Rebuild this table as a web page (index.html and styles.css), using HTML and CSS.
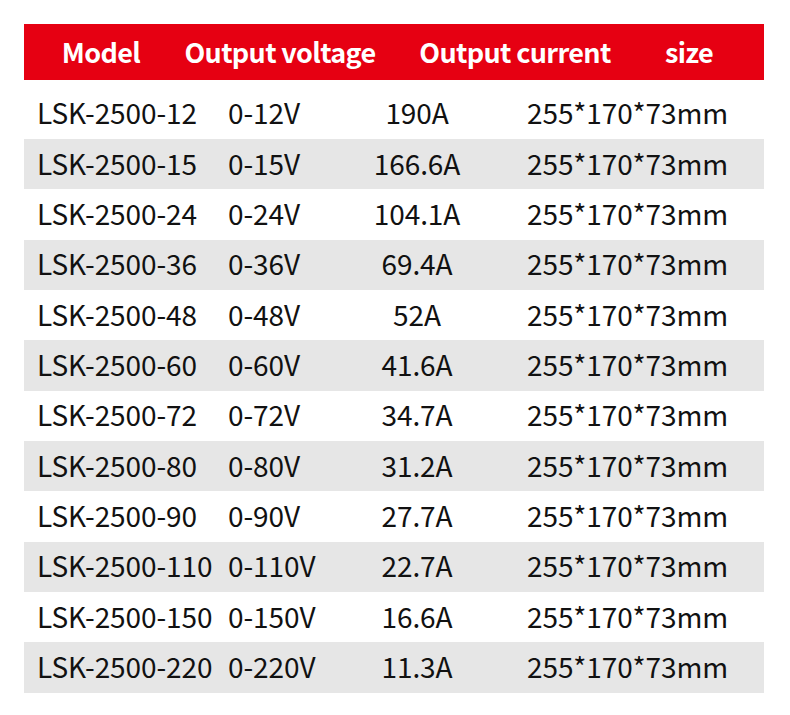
FILE: index.html
```html
<!DOCTYPE html>
<html>
<head>
<meta charset="utf-8">
<link rel="stylesheet" href="styles.css">
</head>
<body>
<div class="page">
  <div class="spec">
    <div class="head">
      <div class="hcell">Model</div>
      <div class="hcell">Output voltage</div>
      <div class="hcell">Output current</div>
      <div class="hcell">size</div>
    </div>
    <div class="rows">
      <div class="row"><div class="c1">LSK-2500-12</div><div class="c2">0-12V</div><div class="c3">190A</div><div class="c4">255*170*73mm</div></div>
      <div class="row alt"><div class="c1">LSK-2500-15</div><div class="c2">0-15V</div><div class="c3">166.6A</div><div class="c4">255*170*73mm</div></div>
      <div class="row"><div class="c1">LSK-2500-24</div><div class="c2">0-24V</div><div class="c3">104.1A</div><div class="c4">255*170*73mm</div></div>
      <div class="row alt"><div class="c1">LSK-2500-36</div><div class="c2">0-36V</div><div class="c3">69.4A</div><div class="c4">255*170*73mm</div></div>
      <div class="row"><div class="c1">LSK-2500-48</div><div class="c2">0-48V</div><div class="c3">52A</div><div class="c4">255*170*73mm</div></div>
      <div class="row alt"><div class="c1">LSK-2500-60</div><div class="c2">0-60V</div><div class="c3">41.6A</div><div class="c4">255*170*73mm</div></div>
      <div class="row"><div class="c1">LSK-2500-72</div><div class="c2">0-72V</div><div class="c3">34.7A</div><div class="c4">255*170*73mm</div></div>
      <div class="row alt"><div class="c1">LSK-2500-80</div><div class="c2">0-80V</div><div class="c3">31.2A</div><div class="c4">255*170*73mm</div></div>
      <div class="row"><div class="c1">LSK-2500-90</div><div class="c2">0-90V</div><div class="c3">27.7A</div><div class="c4">255*170*73mm</div></div>
      <div class="row alt"><div class="c1">LSK-2500-110</div><div class="c2">0-110V</div><div class="c3">22.7A</div><div class="c4">255*170*73mm</div></div>
      <div class="row"><div class="c1">LSK-2500-150</div><div class="c2">0-150V</div><div class="c3">16.6A</div><div class="c4">255*170*73mm</div></div>
      <div class="row alt"><div class="c1">LSK-2500-220</div><div class="c2">0-220V</div><div class="c3">11.3A</div><div class="c4">255*170*73mm</div></div>
    </div>
  </div>
</div>
</body>
</html>
```
FILE: styles.css
```css
html, body {
  margin: 0;
  padding: 0;
  background: #ffffff;
}
.page {
  width: 790px;
  height: 715px;
  box-sizing: border-box;
  padding: 24px 26px 0 24px;
  font-family: "Noto Sans CJK SC", "Noto Sans", sans-serif;
  color: #111111;
}
.spec {
  width: 740px;
}
.head {
  display: grid;
  grid-template-columns: 154px 204px 266px 82px;
  height: 56px;
  box-sizing: border-box;
  padding-bottom: 2px;
  align-items: center;
  background: #e60012;
  color: #ffffff;
  font-size: 27px;
  font-weight: 700;
  letter-spacing: -0.65px;
}
.hcell {
  text-align: center;
  white-space: nowrap;
  line-height: 1;
}
.rows {
  padding-top: 8.5px;
}
.row {
  display: grid;
  grid-template-columns: 204px 120px 138px 278px;
  height: 50.35px;
  box-sizing: border-box;
  padding-bottom: 3px;
  align-items: center;
  font-size: 28px;
  line-height: 1;
  white-space: nowrap;
  letter-spacing: -0.1px;
}
.row.alt {
  background: #e6e6e6;
}
.c1 {
  padding-left: 13px;
}
.c3 {
  text-align: center;
}
.c4 {
  padding-left: 41px;
}
```
